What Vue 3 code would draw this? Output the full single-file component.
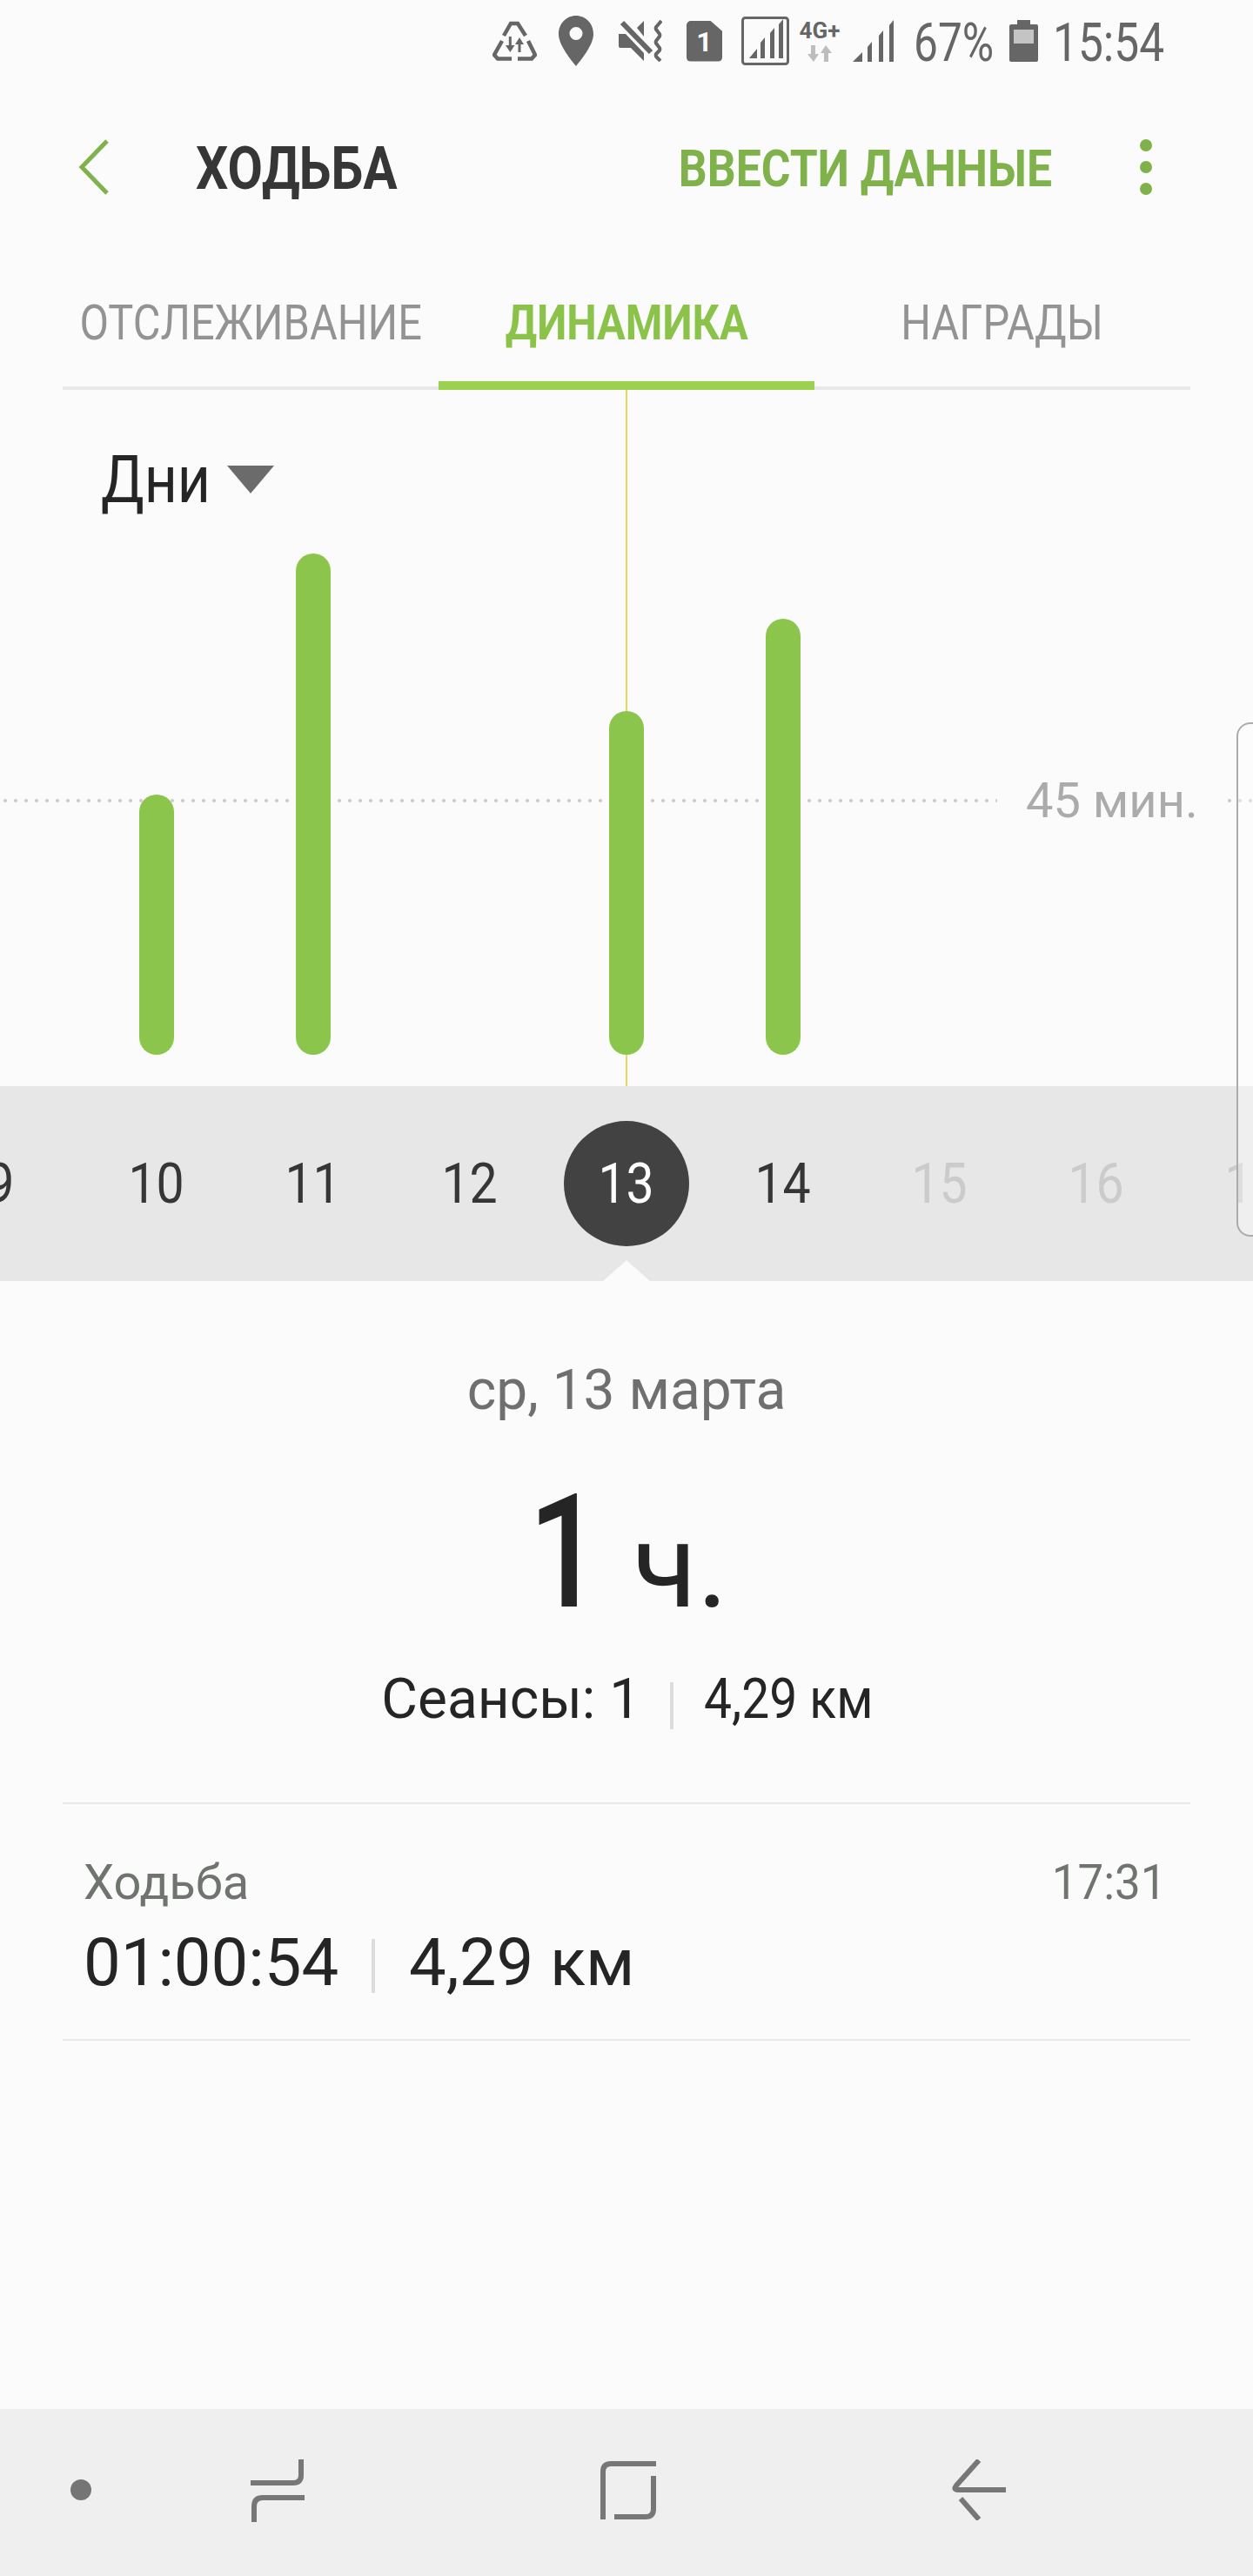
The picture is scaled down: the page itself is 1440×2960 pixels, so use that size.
<template>
  <div class="page">
    <div class="status">
      <svg class="ic recycle" width="51" height="46" viewBox="0 0 51 46">
        <path d="M13 17 L21 3 H29 L38 17 M11 23 L2 39 L6 43.500 H22 M29 43.500 H45 L49 39 L41 23" fill="none" stroke="#666" stroke-width="4.500"/>
        <path d="M18.800 18 H21.800 V28 H25.500 L20.300 36 L15 28 H18.800 Z M29.500 36 H32.500 V27 H36 L31 19 L26 27 H29.500 Z" fill="#666"/>
      </svg>
      <svg class="ic pin" width="40" height="58" viewBox="0 0 40 58">
        <path fill-rule="evenodd" d="M20 0 C31 0 40 9 40 21 C40 33 28 48 20 58 C12 48 0 33 0 21 C0 9 9 0 20 0 Z M20 13 A7.500 7.500 0 1 0 20 28 A7.500 7.500 0 1 0 20 13 Z" fill="#666"/>
      </svg>
      <svg class="ic mute" width="50" height="48" viewBox="0 0 50 48">
        <path d="M0 16 H8 L29 38 V47 L14 32 H2 Q0 32 0 30 Z M21 9 L29 1 V19 Z" fill="#666"/>
        <path d="M4 3 L37 37" stroke="#666" stroke-width="6"/>
        <path d="M49 1 L43 8 Q42 10 44 12 L47 16 Q48 18 46 20 L43 24 Q42 26 44 28 L47 32 Q48 34 46 36 L43 39 Q42 41 44 43 L48 47" fill="none" stroke="#666" stroke-width="4"/>
      </svg>
      <div class="sim"><span>1</span></div>
      <svg class="ic wifi" width="55" height="56" viewBox="0 0 55 56">
        <rect x="1.500" y="1.500" width="52" height="53" rx="3" fill="none" stroke="#666" stroke-width="3"/>
        <path d="M9 48 L18 37 V48 Z M22 48 V30 L27 24 V48 Z M33 48 V19 L38 13 V48 Z M43 48 V9 L48 3 V48 Z" fill="#666"/>
      </svg>
      <div class="net">
        <span class="net-label">4G+</span>
        <svg width="30" height="20" viewBox="0 0 30 20">
          <path d="M5 0 H10 V10 H14 L8 19 L1 10 H5 Z" fill="#bdbdbd"/>
          <path d="M20 19 H25 V9 H29 L22 0 L16 9 H20 Z" fill="#bdbdbd"/>
        </svg>
      </div>
      <svg class="ic sig" width="48" height="48" viewBox="0 0 48 48">
        <path d="M0 48 L11 37 V48 Z M17 48 V31 L22 25 V48 Z M30 48 V18 L35 12 V48 Z M42 48 V6 L47 0 V48 Z" fill="#666"/>
      </svg>
      <span class="st-text pct">67%</span>
      <svg class="ic bat" width="33" height="48" viewBox="0 0 33 48">
        <path d="M9 0 H24 V5 H31 Q33 5 33 7 V46 Q33 48 31 48 H2 Q0 48 0 46 V7 Q0 5 2 5 H9 Z" fill="#666"/>
        <rect x="5" y="11" width="23" height="16" fill="#c4c4c4"/>
      </svg>
      <span class="st-text clock">15:54</span>
    </div>

    <div class="head">
      <svg class="back" width="36" height="64" viewBox="0 0 36 64">
        <path d="M33 2 L4 32 L33 62" fill="none" stroke="#7fb24a" stroke-width="5"/>
      </svg>
      <span class="title">ХОДЬБА</span>
      <span class="enter">ВВЕСТИ ДАННЫЕ</span>
      <div class="dots"><i></i><i></i><i></i></div>
    </div>

    <div class="tabs">
      <div v-for="t in tabs" :key="t" class="tab" :class="{ on: t === 'ДИНАМИКА' }"><span>{{ t }}</span></div>
    </div>

    <div class="chart">
      <div class="vline"></div>
      <div class="mode"><span class="mode-text">Дни</span><i class="caret"></i></div>
      <div class="dotted one"></div>
      <span class="avg">45 мин.</span>
      <div class="dotted two"></div>
      <div class="bars">
        <div v-for="d in days" :key="d.n" class="slot">
          <div v-if="d.h" class="bar" :style="{ height: d.h + 'px' }"></div>
        </div>
      </div>
    </div>

    <div class="band">
      <div v-for="d in days" :key="d.n" class="day" :class="{ sel: d.n === 13, off: d.n > 14 }">
        <div class="day-in"><span>{{ d.n }}</span></div>
      </div>
      <i class="notch"></i>
    </div>

    <div class="summary">
      <div class="date">ср, 13 марта</div>
      <div class="total"><span class="big">1</span><span class="unit">ч.</span></div>
      <div class="meta"><span class="m1">Сеансы: 1</span><i class="sep"></i><span class="m2">4,29 км</span></div>
    </div>

    <div class="list">
      <div class="row-top"><span class="rt1">Ходьба</span><span class="rt2">17:31</span></div>
      <div class="row-main"><span>01:00:54</span><i class="sep tall"></i><span>4,29 км</span></div>
    </div>

    <div class="fill"></div>

    <div class="nav">
      <i class="nav-dot"></i>
      <svg class="n1" width="64" height="72" viewBox="0 0 64 72">
        <path d="M58 0 V18 Q58 27 49 27 H0" fill="none" stroke="#777" stroke-width="6"/>
        <path d="M62 44 H14 Q4 44 4 54 V72" fill="none" stroke="#777" stroke-width="6"/>
      </svg>
      <svg class="n2" width="64" height="68" viewBox="0 0 64 68">
        <path d="M64 3 H12 Q3 3 3 12 V67" fill="none" stroke="#777" stroke-width="6"/>
        <path d="M16 64 H52 Q61 64 61 55 V17" fill="none" stroke="#777" stroke-width="6"/>
      </svg>
      <svg class="n3" width="62" height="70" viewBox="0 0 62 70">
        <path d="M31 1 L5 30 Q1 35 7 35 H62" fill="none" stroke="#777" stroke-width="6"/>
        <path d="M10 45 L31 69" fill="none" stroke="#777" stroke-width="6"/>
      </svg>
    </div>

    <div class="edge"></div>
  </div>
</template>

<script setup>
const tabs = ['ОТСЛЕЖИВАНИЕ', 'ДИНАМИКА', 'НАГРАДЫ']

const days = [
  { n: 9, h: 0 },
  { n: 10, h: 299 },
  { n: 11, h: 576 },
  { n: 12, h: 0 },
  { n: 13, h: 395 },
  { n: 14, h: 501 },
  { n: 15, h: 0 },
  { n: 16, h: 0 },
  { n: 17, h: 0 }
]
</script>

<style>
html, body {
  margin: 0;
  background: #fbfbfb;
}
</style>

<style scoped>
.page {
  position: relative;
  width: 1440px;
  height: 2960px;
  overflow: hidden;
  display: flex;
  flex-direction: column;
  background: #fbfbfb;
  font-family: Roboto, "Liberation Sans", sans-serif;
  color: #252525;
}
.status {
  height: 96px;
  display: flex;
  align-items: center;
  justify-content: flex-end;
  padding: 0 100px 2px 0;
  box-sizing: border-box;
}
.ic {
  display: block;
  flex: none;
}
.sim {
  flex: none;
  width: 41px;
  height: 47px;
  margin-left: 28px;
  background: #666;
  border-radius: 5px;
  clip-path: polygon(0 0, 66% 0, 100% 26%, 100% 100%, 0 100%);
  color: #fbfbfb;
  font-size: 32px;
  font-weight: 700;
  line-height: 49px;
  text-align: center;
}
.pin { margin-left: 25px; }
.mute { margin-left: 29px; }
.wifi { margin-left: 22px; }
.net {
  flex: none;
  width: 48px;
  margin-left: 11px;
  display: flex;
  flex-direction: column;
  align-items: center;
  color: #666;
}
.net-label {
  font-size: 26px;
  font-weight: 700;
  line-height: 26px;
  white-space: nowrap;
}
.net svg { margin-top: 4px; }
.sig { margin-left: 14px; }
.st-text {
  display: inline-block;
  flex: none;
  margin-top: 4px;
  color: #666;
  font-size: 62px;
  line-height: 62px;
  transform-origin: left center;
  white-space: nowrap;
}
.pct {
  width: 92px;
  margin-left: 22px;
  transform: scaleX(0.8);
}
.bat { margin-left: 18px; }
.clock {
  width: 130px;
  margin-left: 17px;
  transform: scaleX(0.83);
}

.head {
  height: 192px;
  display: flex;
  align-items: center;
}
.back {
  flex: none;
  margin-left: 90px;
}
.title {
  margin: 3px 0 0 99px;
  width: 300px;
  font-size: 69px;
  font-weight: 700;
  color: #363636;
  transform: scaleX(0.85);
  transform-origin: left center;
}
.enter {
  margin: 3px 0 0 auto;
  font-size: 60px;
  font-weight: 700;
  color: #7fb24a;
  white-space: nowrap;
  transform: scaleX(0.86);
  transform-origin: right center;
}
.dots {
  flex: none;
  margin: 0 116px 0 101px;
  display: flex;
  flex-direction: column;
  gap: 11px;
}
.dots i {
  display: block;
  width: 14px;
  height: 14px;
  border-radius: 50%;
  background: #7fb24a;
}

.tabs {
  height: 160px;
  margin: 0 72px;
  display: flex;
  border-bottom: 4px solid #e8e8e8;
  box-sizing: border-box;
}
.tab {
  flex: 0 0 432px;
  min-width: 0;
  position: relative;
  display: flex;
  align-items: center;
  justify-content: center;
  padding-top: 10px;
  box-sizing: border-box;
  color: #939393;
  font-size: 56px;
}
.tab span {
  display: inline-block;
  flex: none;
  transform: scaleX(0.87);
  white-space: nowrap;
}
.tab.on {
  color: #8bc34a;
  font-weight: 700;
}
.tab.on::after {
  content: "";
  position: absolute;
  left: 0;
  right: 0;
  bottom: -4px;
  height: 10px;
  background: #9bd14f;
}

.chart {
  position: relative;
  height: 800px;
}
.vline {
  position: absolute;
  left: 719px;
  top: 0;
  bottom: 0;
  width: 2px;
  background: #f0d264;
}
.mode {
  position: absolute;
  left: 116px;
  top: 58px;
  display: flex;
  align-items: center;
  font-size: 76px;
  line-height: 90px;
}
.mode-text {
  display: inline-block;
  width: 145px;
  transform: scaleX(0.87);
  transform-origin: left center;
}
.caret {
  width: 0;
  height: 0;
  border-left: 27px solid transparent;
  border-right: 27px solid transparent;
  border-top: 32px solid #6b6b6b;
}
.dotted {
  position: absolute;
  top: 470px;
  height: 4px;
  background: radial-gradient(circle, #cfcfcf 2px, transparent 2.2px) 0 0 / 12px 4px repeat-x;
}
.dotted.one {
  left: 0;
  width: 1146px;
}
.dotted.two {
  left: 1407px;
  width: 33px;
}
.avg {
  position: absolute;
  left: 1179px;
  top: 439px;
  font-size: 56px;
  line-height: 66px;
  color: #ababab;
}
.bars {
  position: absolute;
  left: -90px;
  bottom: 36px;
  display: flex;
  align-items: flex-end;
}
.slot {
  width: 180px;
  display: flex;
  justify-content: center;
}
.bar {
  width: 40px;
  border-radius: 20px;
  background: #8cc54b;
}

.band {
  position: relative;
  height: 224px;
  margin-left: -90px;
  width: 1620px;
  display: flex;
  background: #e7e7e7;
}
.day {
  width: 180px;
  height: 224px;
  flex: none;
  display: flex;
  align-items: center;
  justify-content: center;
  font-size: 65px;
  color: #363636;
}
.day-in {
  display: flex;
  align-items: center;
  justify-content: center;
  width: 144px;
  height: 144px;
  border-radius: 50%;
}
.day-in span {
  display: inline-block;
  transform: scaleX(0.88);
}
.day.sel .day-in {
  background: #424242;
  color: #fff;
}
.day.off { color: #cbcbcb; }
.notch {
  position: absolute;
  left: 783px;
  bottom: 0;
  width: 0;
  height: 0;
  border-left: 27px solid transparent;
  border-right: 27px solid transparent;
  border-bottom: 24px solid #fbfbfb;
}

.summary {
  display: flex;
  flex-direction: column;
  align-items: center;
  height: 599px;
}
.date {
  margin-top: 89px;
  font-size: 64px;
  line-height: 74px;
  color: #6f6f6f;
}
.total {
  margin: 39px 0 0 -5px;
  height: 220px;
  display: flex;
  align-items: baseline;
  line-height: 220px;
}
.big {
  display: inline-block;
  font-size: 181px;
  font-weight: 500;
  transform: scaleX(0.82);
}
.unit {
  margin-left: 26px;
  font-size: 136px;
}
.meta {
  display: flex;
  align-items: center;
  margin: 22px 0 0 26px;
  font-size: 64px;
  line-height: 74px;
}
.m2 {
  display: inline-block;
  transform: scaleX(0.89);
  transform-origin: left center;
}
.sep {
  display: block;
  width: 4px;
  height: 54px;
  margin: 14px 35px 0 34px;
  background: #dcdcdc;
}
.list {
  height: 274px;
  margin: 0 72px;
  padding: 0 28px 0 24px;
  box-sizing: border-box;
  border-top: 2px solid #e8e8e8;
  border-bottom: 2px solid #e8e8e8;
}
.row-top {
  display: flex;
  justify-content: space-between;
  margin-top: 57px;
  font-size: 56px;
  line-height: 66px;
  color: #6f746f;
}
.rt2 {
  display: inline-block;
  transform: scaleX(0.945);
  transform-origin: right center;
}
.row-main {
  display: flex;
  align-items: center;
  margin-top: 14px;
  font-size: 76px;
  line-height: 90px;
}
.sep.tall {
  height: 62px;
  margin: 8px 39px 0 38px;
}
.fill { flex: 1; }
.nav {
  position: relative;
  flex: none;
  height: 192px;
  background: #efefef;
}
.nav-dot {
  position: absolute;
  left: 81px;
  top: 81px;
  width: 24px;
  height: 24px;
  border-radius: 50%;
  background: #757575;
}
.nav svg { position: absolute; }
.n1 { left: 288px; top: 58px; }
.n2 { left: 690px; top: 60px; }
.n3 { left: 1094px; top: 58px; }
.edge {
  position: absolute;
  left: 1421px;
  top: 830px;
  width: 40px;
  height: 591px;
  border: 2px solid #ababab;
  border-radius: 16px;
  box-sizing: border-box;
  background: rgba(255, 255, 255, 0.35);
}
</style>
